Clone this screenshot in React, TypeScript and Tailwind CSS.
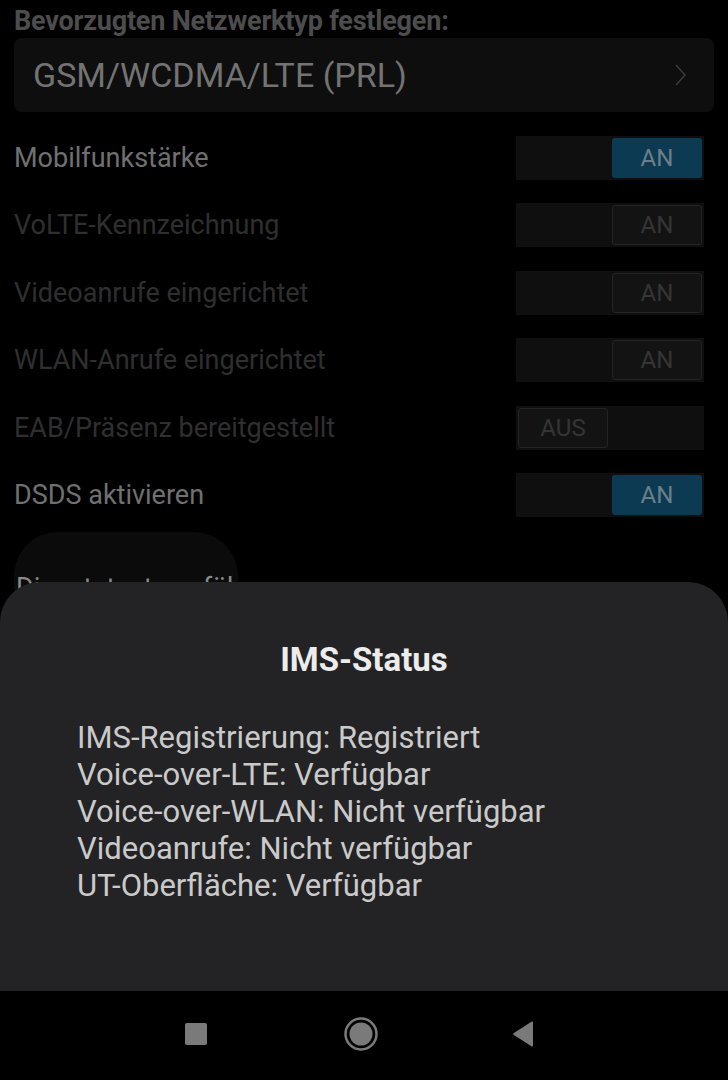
import React from "react";

type Row = { label: string; on: boolean; enabled: boolean; active: boolean };

const rows: Row[] = [
  { label: "Mobilfunkstärke", on: true, enabled: true, active: true },
  { label: "VoLTE-Kennzeichnung", on: true, enabled: false, active: false },
  { label: "Videoanrufe eingerichtet", on: true, enabled: false, active: false },
  { label: "WLAN-Anrufe eingerichtet", on: true, enabled: false, active: false },
  { label: "EAB/Präsenz bereitgestellt", on: false, enabled: false, active: false },
  { label: "DSDS aktivieren", on: true, enabled: true, active: true },
];

const statusLines = [
  "IMS-Registrierung: Registriert",
  "Voice-over-LTE: Verfügbar",
  "Voice-over-WLAN: Nicht verfügbar",
  "Videoanrufe: Nicht verfügbar",
  "UT-Oberfläche: Verfügbar",
];

function Toggle({ on, active }: { on: boolean; active: boolean }) {
  return (
    <div
      className={`flex h-[44px] w-[188px] shrink-0 items-center bg-[#0f0f0f] px-[2px] ${
        on ? "justify-end" : "justify-start"
      }`}
    >
      <div
        className={`flex h-[40px] w-[90px] items-center justify-center rounded-[3px] text-[24px] ${
          active
            ? "bg-[#0b3a52] text-[#6c7f89]"
            : "border border-[#242424] bg-[#131313] text-[#353535]"
        }`}
      >
        {on ? "AN" : "AUS"}
      </div>
    </div>
  );
}

export default function App() {
  return (
    <div
      className="flex h-[1080px] w-[728px] flex-col overflow-hidden bg-black"
      style={{ fontFamily: "Roboto, 'Noto Sans', sans-serif" }}
    >
      <div className="relative flex-1 overflow-hidden">
        <div className="px-[14px] pt-[4px]">
          <div className="whitespace-nowrap text-[27px] font-bold leading-[34px] tracking-[-0.2px] text-[#4d4d4d]">
            Bevorzugten Netzwerktyp festlegen:
          </div>
          <div className="flex h-[74px] items-center justify-between rounded-[8px] bg-[#0e0e0e] pl-[19px] pr-[28px]">
            <span className="whitespace-nowrap text-[34px] text-[#737373]">GSM/WCDMA/LTE (PRL)</span>
            <svg width="11" height="22" viewBox="0 0 11 22" fill="none">
              <path d="M1 1l9 10-9 10" stroke="#3a3a3a" strokeWidth="1.6" />
            </svg>
          </div>

          <div className="mt-[12px]">
            {rows.map((r) => (
              <div key={r.label} className="flex h-[67.5px] items-center justify-between pr-[10px]">
                <span
                  className={`whitespace-nowrap text-[27px] ${r.enabled ? "text-[#707070]" : "text-[#2f2f2f]"}`}
                >
                  {r.label}
                </span>
                <Toggle on={r.on} active={r.active} />
              </div>
            ))}
          </div>

          <div className="mt-[3px] h-[100px] w-[224px] rounded-[44px] bg-[#0b0b0b] pl-[2px] pt-[40px]">
            <span className="whitespace-nowrap text-[27px] leading-[32px] text-[#8a8a8a]">
              Dienstetest ausführen
            </span>
          </div>
        </div>

        {/* IMS status sheet */}
        <div className="absolute bottom-0 left-0 right-0 h-[409px] rounded-t-[40px] bg-[#232325] pt-[59px]">
          <div className="text-center text-[33px] font-bold leading-[38px] text-[#ececec]">
            IMS-Status
          </div>
          <div className="mt-[40px] pl-[77px]">
            {statusLines.map((l) => (
              <div key={l} className="whitespace-nowrap text-[31px] leading-[37px] text-[#cacaca]">
                {l}
              </div>
            ))}
          </div>
        </div>
      </div>

      {/* Nav bar */}
      <div className="flex h-[89px] items-center bg-black pb-[4px] pl-[185px]">
        <div className="h-[22px] w-[22px] rounded-[2px] bg-[#7a7a7a]" />
        <svg className="ml-[137px]" width="34" height="34" viewBox="0 0 34 34">
          <circle cx="17" cy="17" r="15.5" fill="none" stroke="#7a7a7a" strokeWidth="2.5" />
          <circle cx="17" cy="17" r="11.5" fill="#7a7a7a" />
        </svg>
        <svg className="ml-[134px]" width="22" height="26" viewBox="0 0 22 26">
          <path d="M21 1.5v23a1 1 0 0 1-1.6.8L1.5 13.8a1 1 0 0 1 0-1.6L19.4.7A1 1 0 0 1 21 1.5z" fill="#7a7a7a" />
        </svg>
      </div>
    </div>
  );
}
